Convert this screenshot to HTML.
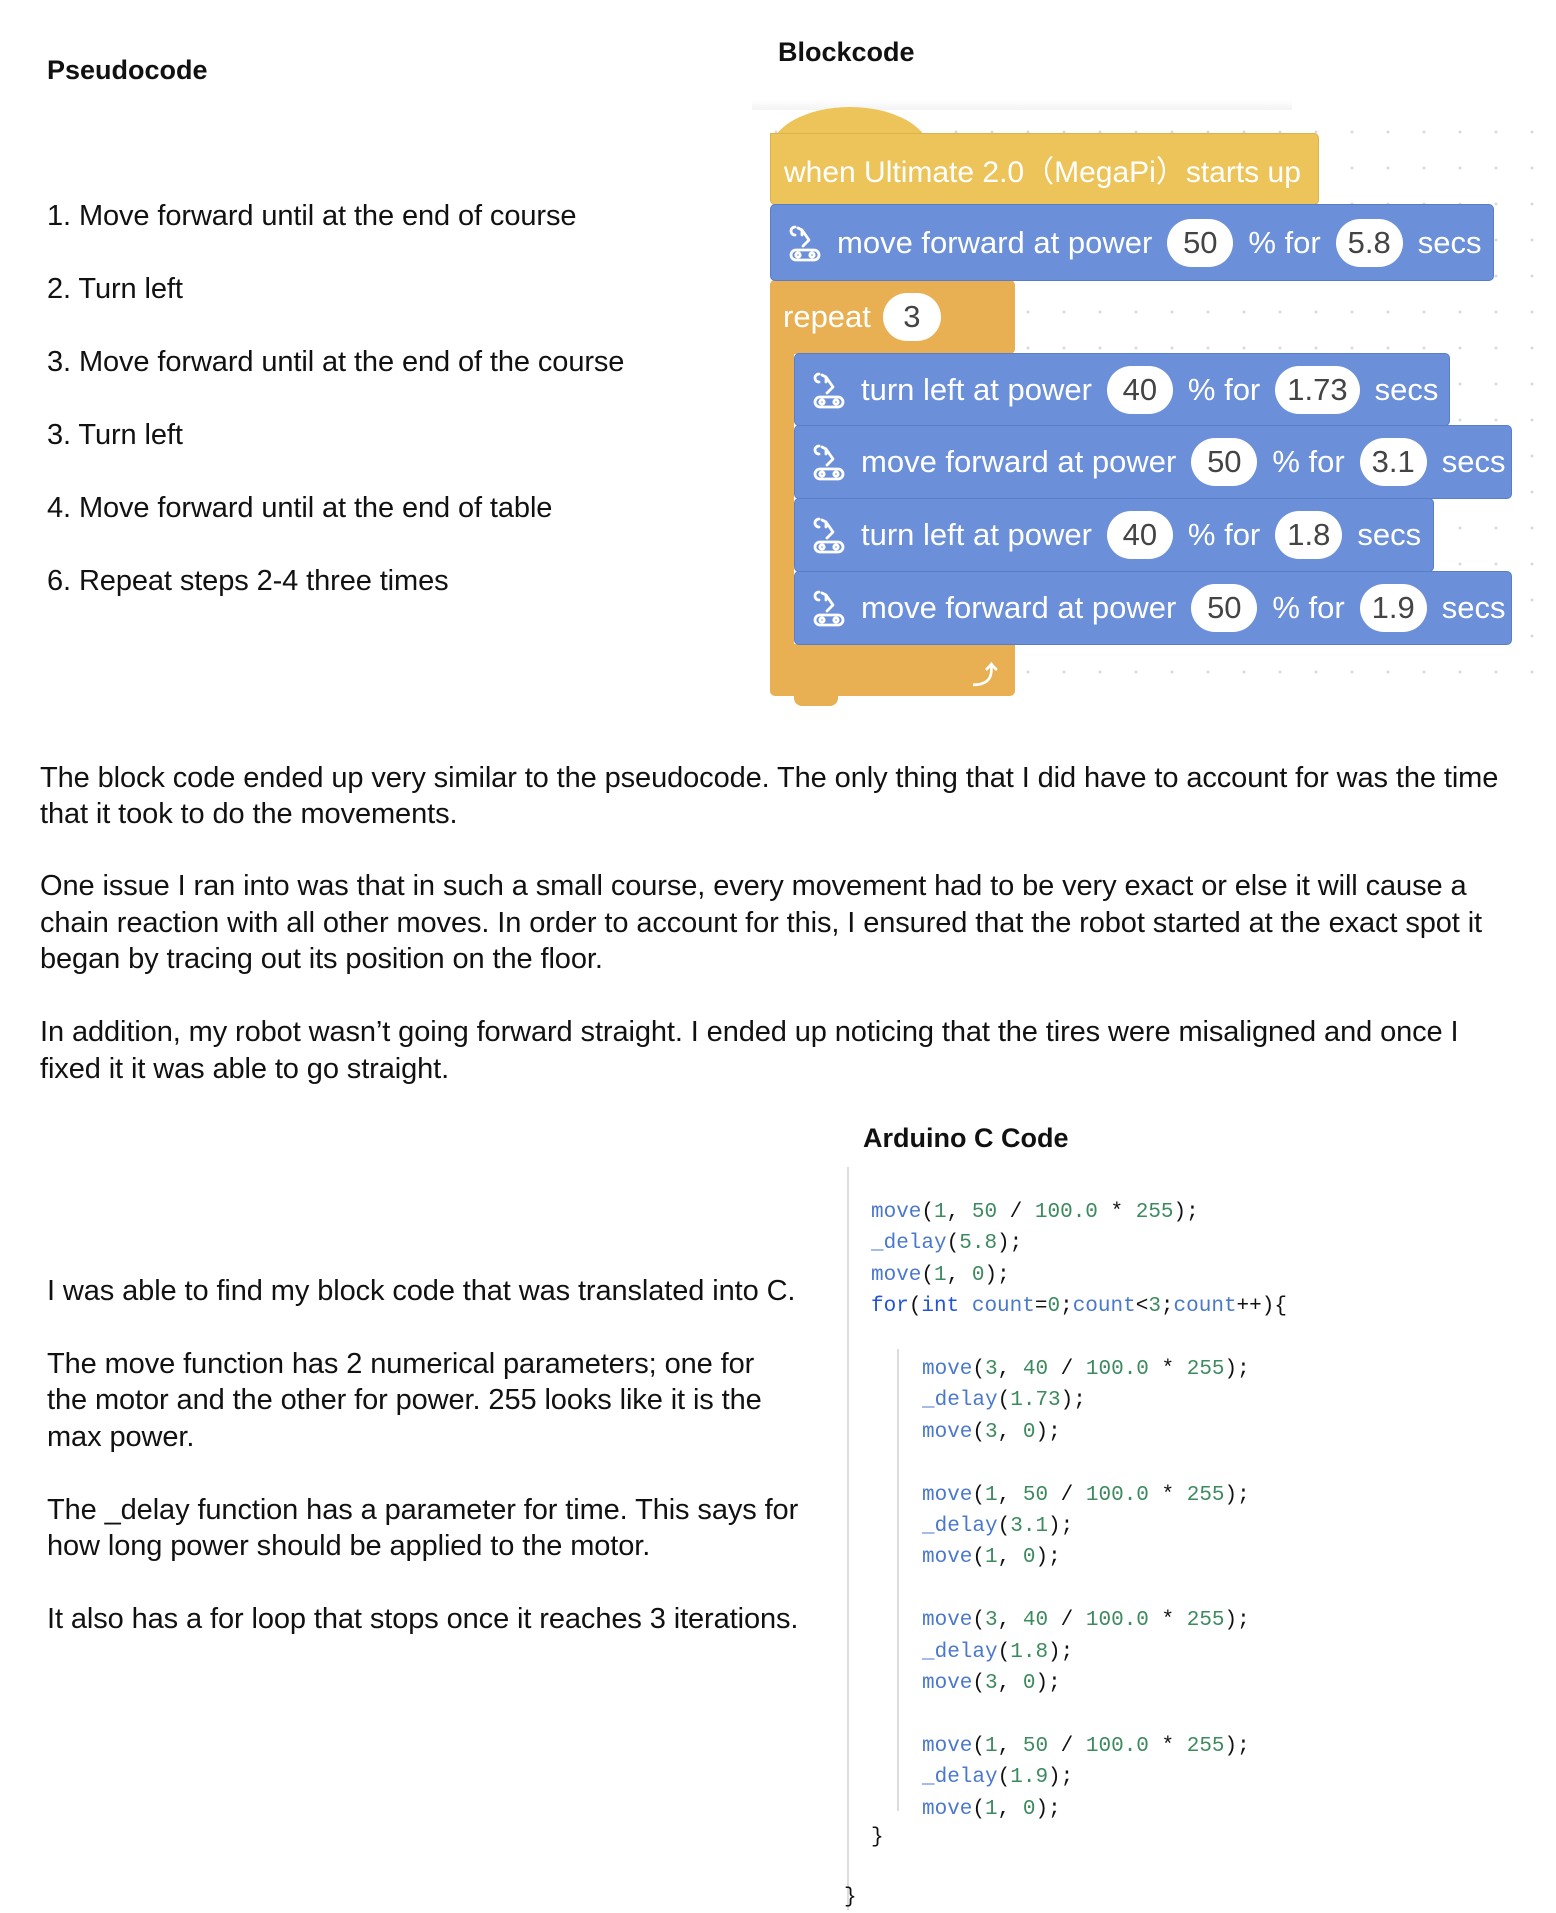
<!DOCTYPE html>
<html><head><meta charset="utf-8"><style>
*{margin:0;padding:0;box-sizing:border-box}
body{width:1556px;height:1910px;background:#fff;position:relative;overflow:hidden;font-family:"Liberation Sans","Noto Sans CJK KR",sans-serif;color:#111}
.t{position:absolute;white-space:nowrap;font-size:29px;line-height:36px;letter-spacing:-0.1px}
.h{position:absolute;white-space:nowrap;font-size:27px;font-weight:bold;line-height:36px}
.grid{position:absolute;left:752px;top:104px;width:804px;height:600px;background-image:radial-gradient(circle,#d9d9d9 1.3px,transparent 1.6px);background-size:36px 36px;background-position:6px 10px}
.band{position:absolute;left:752px;top:100px;width:540px;height:10px;background:linear-gradient(#fff,#f3f3f3)}
.b{position:absolute;display:flex;align-items:center;color:#fff;font-size:31px;white-space:nowrap;border-radius:5px}
.blue{background:#6b8fd8;border:1px solid #587ec9}
.pill{background:#fff;color:#444;border-radius:24px;height:48px;display:inline-flex;align-items:center;justify-content:center;padding:0 12px;margin:0 15px;min-width:66px}
.ic{width:38px;height:40px;margin-right:12px}
.mono{position:absolute;font-family:"Liberation Mono","DejaVu Sans Mono",monospace;font-size:21px;line-height:31.4px;white-space:pre;color:#111}
.f{color:#4a78cc}.n{color:#3d8a5f}.k{color:#2354d8}
</style></head><body>
<div class="h" style="left:47px;top:52px">Pseudocode</div>
<div class="h" style="left:778px;top:34px">Blockcode</div>
<div class="t" style="left:47px;top:198px">1. Move forward until at the end of course</div>
<div class="t" style="left:47px;top:271px">2. Turn left</div>
<div class="t" style="left:47px;top:344px">3. Move forward until at the end of the course</div>
<div class="t" style="left:47px;top:417px">3. Turn left</div>
<div class="t" style="left:47px;top:490px">4. Move forward until at the end of table</div>
<div class="t" style="left:47px;top:563px">6. Repeat steps 2-4 three times</div>

<div class="band"></div>
<div class="grid"></div>
<svg width="0" height="0" style="position:absolute"><defs><g id="robot" fill="none" stroke="#fff" stroke-width="2.8" stroke-linecap="round" stroke-linejoin="round"><path d="M8 4 a4 4 0 1 0 0 8 M11 5 l4 2 l0 5 M15 7 l7 10 l-6 6"/><rect x="4" y="27" width="28" height="10" rx="5"/><circle cx="11" cy="32" r="2.2"/><circle cx="25" cy="32" r="2.2"/></g></defs></svg>

<!-- hat -->
<div style="position:absolute;left:770px;top:107px;width:160px;height:60px;background:#ecc45a;border-radius:80px 80px 0 0/45px 45px 0 0"></div>
<div class="b" style="left:770px;top:133px;width:549px;height:72px;background:#ecc45a;border:1px solid #dcb24a;padding-left:13px;border-radius:0 5px 5px 5px;font-size:30px">when Ultimate 2.0（MegaPi）starts up</div>
<!-- repeat -->
<div style="position:absolute;left:770px;top:280px;width:24px;height:415px;background:#e8b052;border-radius:5px 0 0 5px"></div>
<div class="b" style="left:770px;top:280px;width:245px;height:74px;background:#e8b052;padding-left:13px">repeat<span class="pill" style="margin-left:12px;min-width:58px">3</span></div>
<div style="position:absolute;left:770px;top:644px;width:245px;height:52px;background:#e8b052;border-radius:0 0 5px 5px"></div>
<div style="position:absolute;left:794px;top:694px;width:44px;height:12px;background:#e8b052;border-radius:0 0 8px 8px"></div>
<div style="position:absolute;left:972px;top:655px;color:#fff;font-size:26px;font-weight:bold">⤴</div>
<!-- move 1 -->
<div class="b blue" style="left:770px;top:204px;width:724px;height:77px;padding-left:16px"><svg class="ic" viewBox="0 0 38 40"><use href="#robot"/></svg>move forward at power<span class="pill">50</span>% for<span class="pill">5.8</span>secs</div>
<div class="b blue" style="left:794px;top:353px;width:656px;height:73px;padding-left:16px"><svg class="ic" viewBox="0 0 38 40"><use href="#robot"/></svg>turn left at power<span class="pill">40</span>% for<span class="pill" style="min-width:82px">1.73</span>secs</div>
<div class="b blue" style="left:794px;top:425px;width:718px;height:74px;padding-left:16px"><svg class="ic" viewBox="0 0 38 40"><use href="#robot"/></svg>move forward at power<span class="pill">50</span>% for<span class="pill">3.1</span>secs</div>
<div class="b blue" style="left:794px;top:498px;width:640px;height:74px;padding-left:16px"><svg class="ic" viewBox="0 0 38 40"><use href="#robot"/></svg>turn left at power<span class="pill">40</span>% for<span class="pill">1.8</span>secs</div>
<div class="b blue" style="left:794px;top:571px;width:718px;height:74px;padding-left:16px"><svg class="ic" viewBox="0 0 38 40"><use href="#robot"/></svg>move forward at power<span class="pill">50</span>% for<span class="pill">1.9</span>secs</div>

<div class="t" style="left:40px;top:760px">The block code ended up very similar to the pseudocode. The only thing that I did have to account for was the time</div>
<div class="t" style="left:40px;top:796px">that it took to do the movements.</div>
<div class="t" style="left:40px;top:868px">One issue I ran into was that in such a small course, every movement had to be very exact or else it will cause a</div>
<div class="t" style="left:40px;top:905px">chain reaction with all other moves. In order to account for this, I ensured that the robot started at the exact spot it</div>
<div class="t" style="left:40px;top:941px">began by tracing out its position on the floor.</div>
<div class="t" style="left:40px;top:1014px">In addition, my robot wasn’t going forward straight. I ended up noticing that the tires were misaligned and once I</div>
<div class="t" style="left:40px;top:1051px">fixed it it was able to go straight.</div>

<div class="h" style="left:863px;top:1120px">Arduino C Code</div>
<div class="t" style="left:47px;top:1273px">I was able to find my block code that was translated into C.</div>
<div class="t" style="left:47px;top:1346px">The move function has 2 numerical parameters; one for</div>
<div class="t" style="left:47px;top:1382px">the motor and the other for power. 255 looks like it is the</div>
<div class="t" style="left:47px;top:1419px">max power.</div>
<div class="t" style="left:47px;top:1492px">The _delay function has a parameter for time. This says for</div>
<div class="t" style="left:47px;top:1528px">how long power should be applied to the motor.</div>
<div class="t" style="left:47px;top:1601px">It also has a for loop that stops once it reaches 3 iterations.</div>

<div style="position:absolute;left:847px;top:1167px;width:2px;height:743px;background:#ddd"></div>
<div style="position:absolute;left:897px;top:1349px;width:2px;height:462px;background:#ddd"></div>
<div class="mono" style="left:871px;top:1197px"><span class="f">move</span>(<span class="n">1</span>, <span class="n">50</span> / <span class="n">100.0</span> * <span class="n">255</span>);
<span class="f">_delay</span>(<span class="n">5.8</span>);
<span class="f">move</span>(<span class="n">1</span>, <span class="n">0</span>);
<span class="k">for</span>(<span class="k">int</span> <span class="f">count</span>=<span class="n">0</span>;<span class="f">count</span>&lt;<span class="n">3</span>;<span class="f">count</span>++){</div>
<div class="mono" style="left:922px;top:1354px"><span class="f">move</span>(<span class="n">3</span>, <span class="n">40</span> / <span class="n">100.0</span> * <span class="n">255</span>);
<span class="f">_delay</span>(<span class="n">1.73</span>);
<span class="f">move</span>(<span class="n">3</span>, <span class="n">0</span>);

<span class="f">move</span>(<span class="n">1</span>, <span class="n">50</span> / <span class="n">100.0</span> * <span class="n">255</span>);
<span class="f">_delay</span>(<span class="n">3.1</span>);
<span class="f">move</span>(<span class="n">1</span>, <span class="n">0</span>);

<span class="f">move</span>(<span class="n">3</span>, <span class="n">40</span> / <span class="n">100.0</span> * <span class="n">255</span>);
<span class="f">_delay</span>(<span class="n">1.8</span>);
<span class="f">move</span>(<span class="n">3</span>, <span class="n">0</span>);

<span class="f">move</span>(<span class="n">1</span>, <span class="n">50</span> / <span class="n">100.0</span> * <span class="n">255</span>);
<span class="f">_delay</span>(<span class="n">1.9</span>);
<span class="f">move</span>(<span class="n">1</span>, <span class="n">0</span>);</div>
<div class="mono" style="left:871px;top:1822px">}</div>
<div class="mono" style="left:844px;top:1882px">}</div>
</body></html>
